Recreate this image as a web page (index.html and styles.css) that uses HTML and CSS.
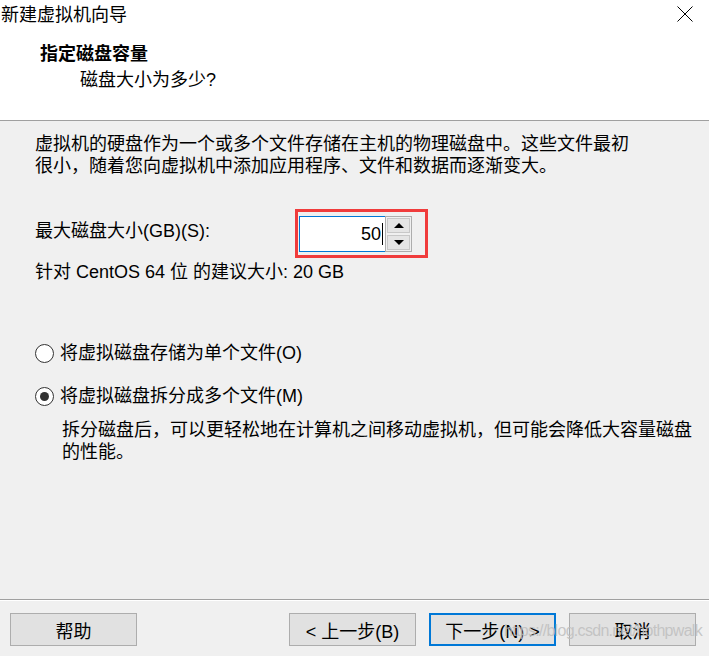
FILE: index.html
```html
<!DOCTYPE html>
<html lang="zh-CN">
<head>
    <meta charset="UTF-8">
    <meta name="viewport" content="width=device-width, initial-scale=1.0">
    <title>新建虚拟机向导</title>
    <link rel="stylesheet" href="styles.css">
</head>
<body>
    <div class="dialog">
        <div class="top">
            <div class="titlebar">
                <span class="title">新建虚拟机向导</span>
                <span class="close">
                    <svg width="16" height="16" viewBox="0 0 16 16">
                        <path d="M0.5 0.5 L15.5 15.5 M15.5 0.5 L0.5 15.5" stroke="#000" stroke-width="1" fill="none" />
                    </svg>
                </span>
            </div>
            <div class="header">
                <div class="header-title">指定磁盘容量</div>
                <div class="header-sub">磁盘大小为多少?</div>
            </div>
        </div>

        <div class="content">
            <p class="intro">虚拟机的硬盘作为一个或多个文件存储在主机的物理磁盘中。这些文件最初很小，随着您向虚拟机中添加应用程序、文件和数据而逐渐变大。</p>

            <div class="size-row">
                <span class="size-label">最大磁盘大小(GB)(S):</span>
                <div class="highlight">
                    <div class="spin-value">50<span class="caret"></span></div>
                    <div class="spin-buttons">
                        <div class="spin-btn"><span class="arrow-up"></span></div>
                        <div class="spin-btn"><span class="arrow-down"></span></div>
                    </div>
                </div>
            </div>

            <p class="recommend">针对 CentOS 64 位 的建议大小: 20 GB</p>

            <div class="options">
                <div class="option"><span class="radio"></span>将虚拟磁盘存储为单个文件(O)</div>
                <div class="option option-second"><span class="radio radio-checked"></span>将虚拟磁盘拆分成多个文件(M)</div>
                <p class="option-note">拆分磁盘后，可以更轻松地在计算机之间移动虚拟机，但可能会降低大容量磁盘的性能。</p>
            </div>
        </div>

        <div class="footer">
            <button class="btn">帮助</button>
            <div class="footer-right">
                <button class="btn">&lt; 上一步(B)</button>
                <button class="btn btn-default">下一步(N) &gt;</button>
                <button class="btn">取消</button>
            </div>
        </div>

        <div class="watermark">https://blog.csdn.net/hothpwalk</div>
    </div>
</body>
</html>
```

FILE: styles.css
```css
body {
    margin: 0;
    font-family: "Liberation Sans", "Noto Sans CJK SC", sans-serif;
    font-size: 18px;
    color: #000;
}

.dialog {
    position: relative;
    width: 709px;
    height: 656px;
    display: flex;
    flex-flow: column nowrap;
    background-color: #f0f0f0;
    overflow: hidden;
}

.top {
    height: 121px;
    box-sizing: border-box;
    background-color: #fff;
    border-bottom: 1px solid #a0a0a0;
}
.titlebar {
    height: 26px;
    display: flex;
    justify-content: space-between;
    align-items: center;
}
.title {
    padding-left: 1px;
    line-height: 26px;
    font-family: "Noto Sans CJK SC", sans-serif;
}
.close {
    width: 16px;
    height: 16px;
    margin-right: 16px;
    margin-top: 1px;
}
.close svg {
    display: block;
}
.header {
    padding-top: 15px;
}
.header-title {
    padding-left: 40px;
    line-height: 26px;
    font-weight: bold;
}
.header-sub {
    padding-left: 80px;
    line-height: 26px;
}

.content {
    flex: 1;
    padding: 12px 0 0 35px;
}
.intro {
    width: 600px;
    margin: 0;
    line-height: 22px;
}

.size-row {
    margin-top: 32px;
    display: flex;
    align-items: flex-start;
}
.size-label {
    width: 260px;
    margin-top: 11px;
    line-height: 22px;
}
.highlight {
    display: flex;
    padding: 4px 13px 3px 1px;
    border: 3px solid #f03c3c;
}
.spin-value {
    width: 86px;
    height: 36px;
    box-sizing: border-box;
    padding-right: 2px;
    display: flex;
    justify-content: flex-end;
    align-items: center;
    background-color: #fff;
    border: 1px solid #0078d7;
    border-right: 0;
    line-height: 22px;
}
.caret {
    width: 1px;
    height: 22px;
    margin-left: 1px;
    background-color: #000;
}
.spin-buttons {
    width: 27px;
    height: 36px;
    box-sizing: border-box;
    display: flex;
    flex-flow: column nowrap;
    border: 1px solid #adadad;
    background-color: #f0f0f0;
}
.spin-btn {
    flex: 1;
    display: flex;
    justify-content: center;
    align-items: center;
    margin: 1px;
    background-color: #e5e5e5;
    border: 1px solid #c8c8c8;
}
.arrow-up {
    border-left: 5px solid transparent;
    border-right: 5px solid transparent;
    border-bottom: 5px solid #000;
}
.arrow-down {
    border-left: 5px solid transparent;
    border-right: 5px solid transparent;
    border-top: 5px solid #000;
}

.recommend {
    margin: 3px 0 0 0;
    line-height: 22px;
}

.options {
    margin-top: 59px;
}
.option {
    display: flex;
    align-items: center;
    line-height: 22px;
}
.option-second {
    margin-top: 21px;
}
.radio {
    width: 19px;
    height: 19px;
    box-sizing: border-box;
    margin-right: 6px;
    display: flex;
    justify-content: center;
    align-items: center;
    background-color: #fff;
    border: 1px solid #333;
    border-radius: 50%;
}
.radio-checked::after {
    content: "";
    width: 9px;
    height: 9px;
    background-color: #333;
    border-radius: 50%;
}
.option-note {
    width: 640px;
    margin: 12px 0 0 27px;
    line-height: 22px;
}

.footer {
    display: flex;
    justify-content: space-between;
    padding: 13px 13px 10px 10px;
    border-top: 1px solid #a0a0a0;
    box-shadow: inset 0 1px 0 #fff;
}
.footer-right {
    display: flex;
    gap: 13px;
}
.btn {
    width: 127px;
    height: 33px;
    box-sizing: border-box;
    padding: 0;
    background-color: #e1e1e1;
    border: 1px solid #adadad;
    font-family: "Liberation Sans", "Noto Sans CJK SC", sans-serif;
    font-size: 18px;
    color: #000;
}
.btn-default {
    border: 2px solid #0078d7;
}

.watermark {
    position: absolute;
    left: 504px;
    top: 622px;
    font-size: 16px;
    letter-spacing: -0.7px;
    color: rgba(190, 190, 190, 0.85);
    pointer-events: none;
}
```
